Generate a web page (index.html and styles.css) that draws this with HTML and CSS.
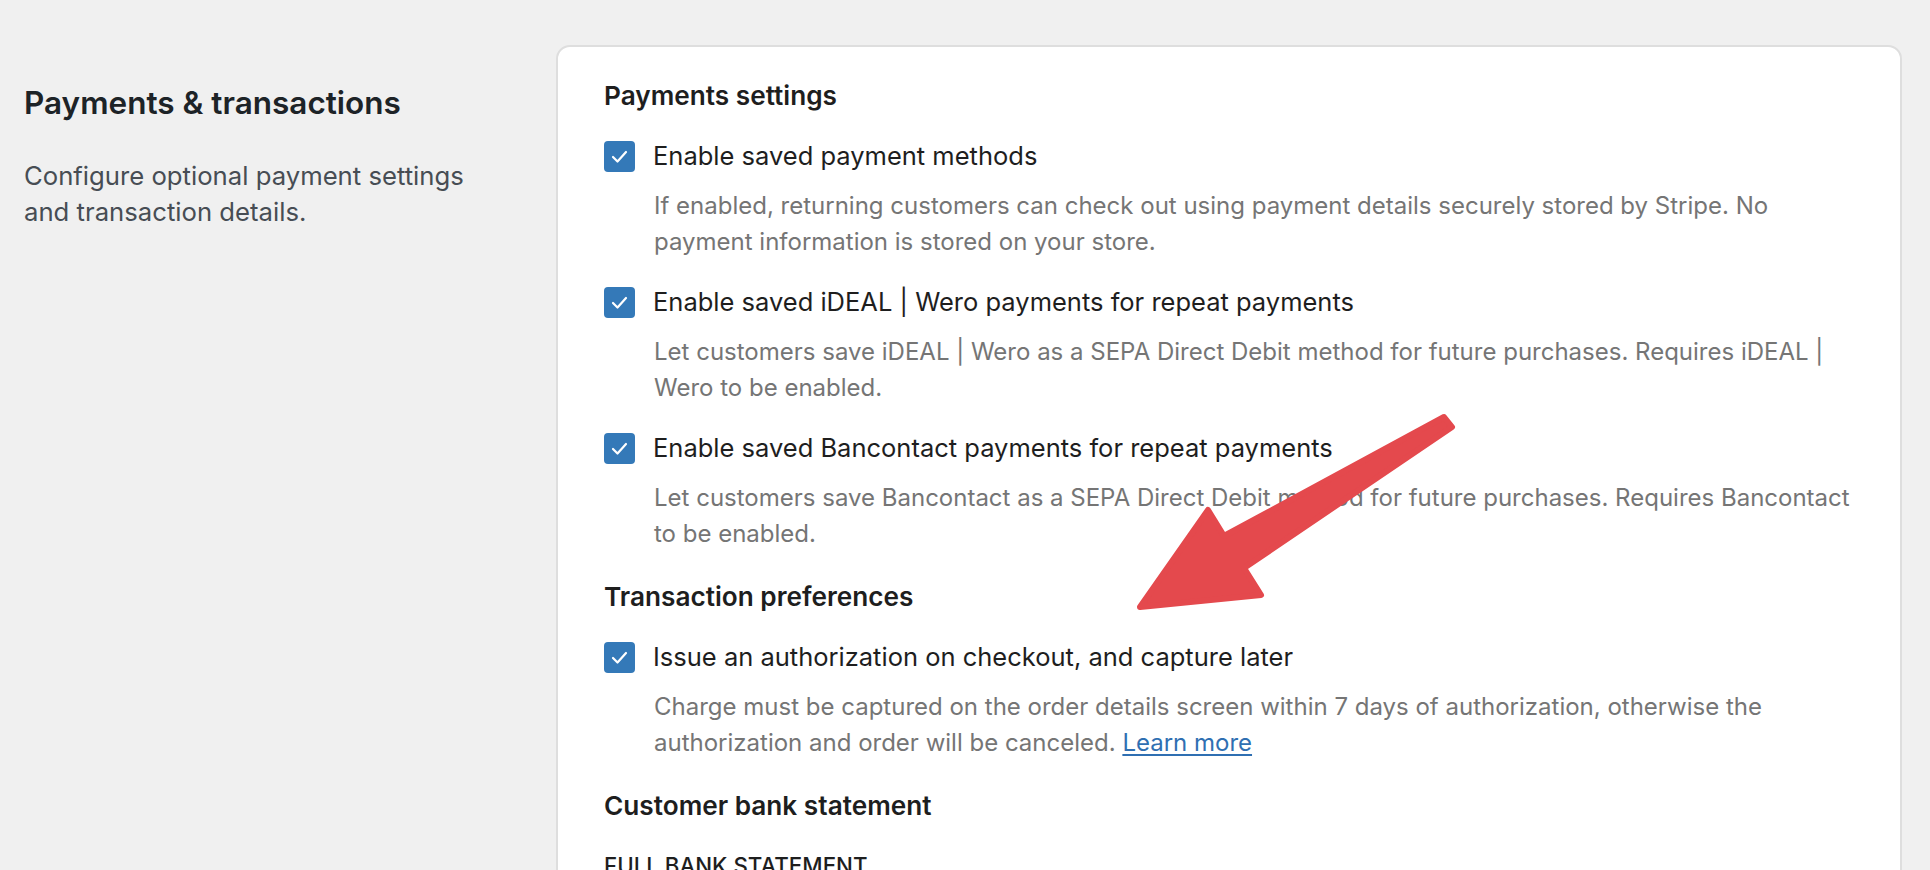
FILE: index.html
```html
<!DOCTYPE html>
<html lang="en">
<head>
<meta charset="utf-8">
<title>Payments &amp; transactions</title>
<link rel="stylesheet" href="styles.css">
</head>
<body>
<div class="layout">
  <aside class="intro">
    <h2 class="intro-title">Payments &amp; transactions</h2>
    <p class="intro-desc">Configure optional payment settings and transaction details.</p>
  </aside>
  <main class="card">
    <section class="group">
      <h3 class="group-title">Payments settings</h3>
      <div class="option">
        <label class="option-row"><span class="checkbox"><svg viewBox="0 0 31 31" width="31" height="31"><polyline points="9,16 13.5,20.5 22,11" fill="none" stroke="#fff" stroke-width="2.2" stroke-linecap="round" stroke-linejoin="round"/></svg></span><span class="option-label">Enable saved payment methods</span></label>
        <p class="option-desc">If enabled, returning customers can check out using payment details securely stored by Stripe. No payment information is stored on your store.</p>
      </div>
      <div class="option">
        <label class="option-row"><span class="checkbox"><svg viewBox="0 0 31 31" width="31" height="31"><polyline points="9,16 13.5,20.5 22,11" fill="none" stroke="#fff" stroke-width="2.2" stroke-linecap="round" stroke-linejoin="round"/></svg></span><span class="option-label">Enable saved iDEAL | Wero payments for repeat payments</span></label>
        <p class="option-desc">Let customers save iDEAL | Wero as a SEPA Direct Debit method for future purchases. Requires iDEAL | Wero to be enabled.</p>
      </div>
      <div class="option">
        <label class="option-row"><span class="checkbox"><svg viewBox="0 0 31 31" width="31" height="31"><polyline points="9,16 13.5,20.5 22,11" fill="none" stroke="#fff" stroke-width="2.2" stroke-linecap="round" stroke-linejoin="round"/></svg></span><span class="option-label">Enable saved Bancontact payments for repeat payments</span></label>
        <p class="option-desc">Let customers save Bancontact as a SEPA Direct Debit method for future purchases. Requires Bancontact to be enabled.</p>
      </div>
    </section>
    <section class="group">
      <h3 class="group-title">Transaction preferences</h3>
      <div class="option">
        <label class="option-row"><span class="checkbox"><svg viewBox="0 0 31 31" width="31" height="31"><polyline points="9,16 13.5,20.5 22,11" fill="none" stroke="#fff" stroke-width="2.2" stroke-linecap="round" stroke-linejoin="round"/></svg></span><span class="option-label">Issue an authorization on checkout, and capture later</span></label>
        <p class="option-desc">Charge must be captured on the order details screen within 7 days of authorization, otherwise the authorization and order will be canceled. <a href="#" class="link">Learn more</a></p>
      </div>
    </section>
    <section class="group">
      <h3 class="group-title">Customer bank statement</h3>
      <p class="field-label">FULL BANK STATEMENT</p>
    </section>
  </main>
</div>
<svg class="annotation" width="1930" height="870" viewBox="0 0 1930 870" aria-hidden="true">
  <polygon points="1444,417 1452,427 1244,568 1261,595 1140,607 1208,510 1224,536" fill="#e4494d" stroke="#e4494d" stroke-width="6" stroke-linejoin="round"/>
</svg>
</body>
</html>
```

FILE: styles.css
```css
html, body {
  margin: 0;
  padding: 0;
}
body {
  background: #f0f0f0;
  font-family: Inter, "Liberation Sans", sans-serif;
  color: #1e1e1e;
  width: 1930px;
  height: 870px;
  overflow: hidden;
  position: relative;
}
.layout {
  display: flex;
  align-items: flex-start;
  gap: 72px;
  padding: 45px 28px 0 24px;
}
.intro {
  width: 460px;
  flex: none;
  padding-top: 38px;
}
.intro-title {
  margin: 0;
  font-size: 31.5px;
  line-height: 40px;
  font-weight: 600;
  color: #1d2327;
}
.intro-desc {
  margin: 35px 0 0;
  font-size: 25.7px;
  line-height: 36px;
  color: #474d54;
}
.card {
  flex: 1;
  background: #fff;
  border: 2px solid #dedede;
  border-radius: 14px;
  padding: 32px 36px 40px 46px;
  min-height: 900px;
}
.group {
  display: flex;
  flex-direction: column;
  gap: 24px;
}
.group + .group {
  margin-top: 28px;
}
.group-title {
  margin: 0 0 1px;
  font-size: 26.2px;
  line-height: 34px;
  font-weight: 600;
  color: #1e1e1e;
}
.option-row {
  display: flex;
  align-items: center;
  gap: 18px;
}
.checkbox {
  width: 31px;
  height: 31px;
  flex: none;
  border-radius: 4px;
  background: #3479b8;
  display: block;
}
.checkbox svg {
  display: block;
}
.option-label {
  font-size: 25.5px;
  line-height: 36px;
  color: #1e1e1e;
}
.option-desc {
  margin: 14px 0 0;
  padding-left: 50px;
  font-size: 24px;
  line-height: 36px;
  color: #757575;
}
.link {
  color: #2f6fb2;
  text-decoration: underline;
  text-underline-offset: 3px;
}
.field-label {
  margin: 4px 0 0;
  font-size: 22.3px;
  line-height: 28px;
  font-weight: 500;
  color: #1e1e1e;
}
.annotation {
  position: absolute;
  top: 0;
  left: 0;
  pointer-events: none;
}
```
